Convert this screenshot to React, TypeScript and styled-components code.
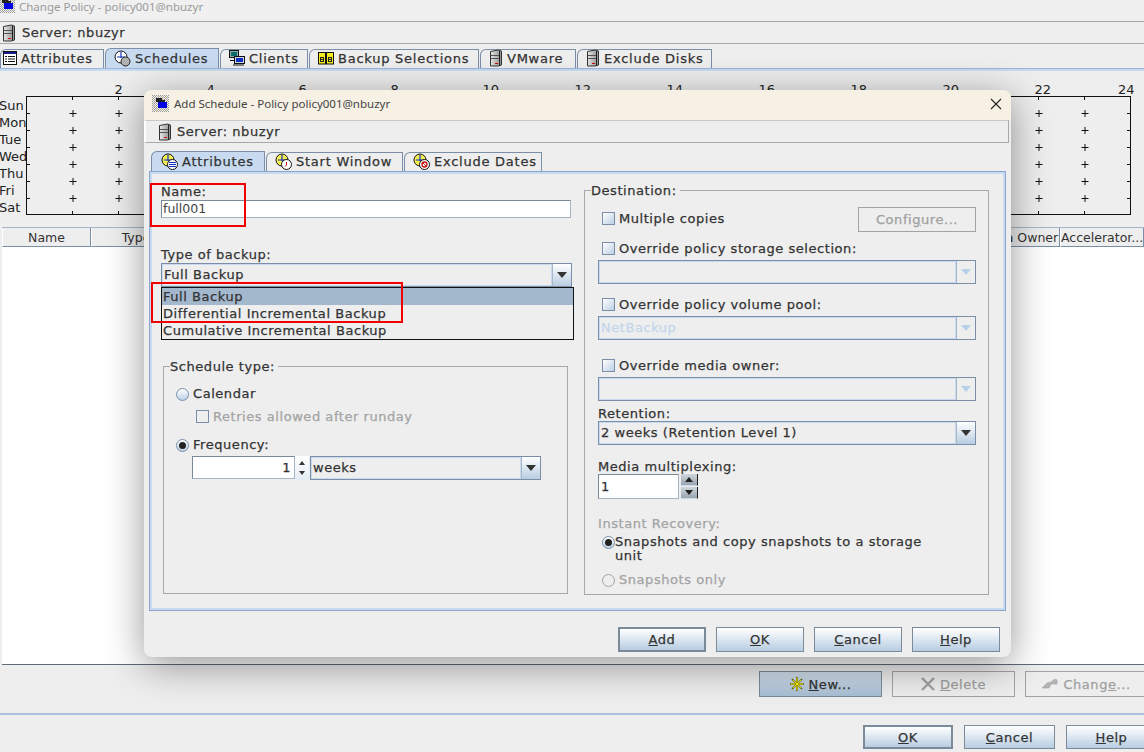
import React from 'react';
import styled, { createGlobalStyle } from 'styled-components';

const GlobalStyle = createGlobalStyle`
  html, body { margin: 0; padding: 0; background: #eeeeee; }
  * { box-sizing: border-box; }
`;

const Page = styled.div`
  position: relative;
  width: 1144px;
  height: 752px;
  overflow: hidden;
  display: flex;
  flex-direction: column;
  background: #eeeeee;
  color: #333333;
  font-family: "DejaVu Sans", sans-serif;
  font-size: 13px;
  line-height: 15px;
  letter-spacing: 0.55px;
  -webkit-text-stroke: 0.25px #333333;
`;

const WindowBar = styled.div`
  height: 22px;
  flex: none;
  display: flex;
  align-items: flex-start;
  gap: 4px;
  background: #f0f0f0;
  border-bottom: 1px solid #a8a8a8;
  color: #9a9a9a;
  font-family: "Noto Sans", sans-serif;
  font-size: 11.5px;
  line-height: 13px;
  letter-spacing: 0;
  -webkit-text-stroke: 0;
  overflow: hidden;

  svg { margin: -4px 0 0 -2px; }
`;

const ServerBar = styled.div`
  height: 22px;
  flex: none;
  display: flex;
  align-items: center;
  gap: 6px;
  padding-left: 2px;
  border-bottom: 1px solid #a8a8a8;
`;

const TabStrip = styled.div<{ $left: number; $top: number }>`
  display: flex;
  flex: none;
  height: 20px;
  gap: 1px;
  margin-top: ${p => p.$top}px;
  padding-left: ${p => p.$left}px;
  align-items: flex-end;
`;

const Tab = styled.div<{ $w: number; $pad?: number; $active?: boolean }>`
  width: ${p => p.$w}px;
  height: ${p => (p.$active ? 20 : 19)}px;
  display: flex;
  align-items: center;
  gap: 4px;
  padding: 0 0 ${p => (p.$active ? 0 : 2)}px ${p => p.$pad ?? 8}px;
  border: 1px solid #7a8ea8;
  border-bottom: none;
  border-top-left-radius: 6px;
  background: ${p => (p.$active ? '#c8daef' : '#eeeeee')};
  letter-spacing: 0.75px;
  white-space: nowrap;
`;

const TabBand = styled.div`
  height: 3px;
  flex: none;
  background: #c8daef;
  border-top: 1px solid #9cb6d6;
`;

const ChartWrap = styled.div`
  height: 156px;
  flex: none;
`;

const ChartSvg = styled.svg`
  display: block;
`;

const ChartText = styled.text`
  font-family: "DejaVu Sans", sans-serif;
  font-size: 13px;
  letter-spacing: 0;
  fill: #222222;
  stroke: none;
  -webkit-text-stroke: 0;
`;

const TableWrap = styled.div`
  height: 438px;
  flex: none;
  margin-left: 2px;
  display: flex;
  flex-direction: column;
  background: #ffffff;
  border-bottom: 1px solid #5f6a75;
`;

const TableHead = styled.div`
  display: flex;
  flex: none;
  height: 20px;
  background: #eeeeee;
  border-top: 1px solid #a8b6c6;
`;

const HeadCell = styled.div<{ $w?: number }>`
  ${p => (p.$w ? `width: ${p.$w}px; flex: none;` : 'flex: 1;')}
  text-align: center;
  line-height: 19px;
  font-size: 12.5px;
  letter-spacing: 0;
  white-space: nowrap;
  overflow: hidden;
  border-right: 1px solid #7a8ea8;
  border-bottom: 1px solid #7a8ea8;
  border-left: 1px solid #ffffff;
  -webkit-text-stroke: 0;
`;

const ActionRow = styled.div`
  display: flex;
  flex: none;
  height: 50px;
  gap: 10px;
  padding: 6px 0 0 759px;
  border-bottom: 2px solid #a9c0da;
`;

const FooterRow = styled.div`
  display: flex;
  flex: none;
  gap: 11px;
  padding: 10px 0 0 863px;
`;

const Btn = styled.div<{ $w: number; $h: number; $kind?: 'default' | 'hover' | 'off' }>`
  width: ${p => p.$w}px;
  height: ${p => p.$h}px;
  flex: none;
  display: flex;
  align-items: center;
  justify-content: center;
  gap: 5px;
  white-space: nowrap;
  border: ${p => (p.$kind === 'default' ? '2px solid #7a8a99' : '1px solid #7a8a99')};
  background: linear-gradient(#ffffff, #b8cde2);
  ${p => p.$kind === 'hover' && 'background: linear-gradient(#d3e0ed, #a9bfd4);'}
  ${p => p.$kind === 'off' && `
    background: transparent;
    border-color: #a3a3a3;
    color: #9f9f9f;
    -webkit-text-stroke: 0.25px #9f9f9f;
  `}
`;

const Dialog = styled.div`
  position: absolute;
  left: 144px;
  top: 90px;
  width: 867px;
  height: 567px;
  display: flex;
  flex-direction: column;
  background: #eeeeee;
  border-radius: 8px;
  box-shadow: 0 8px 38px rgba(0, 0, 0, 0.42);
  overflow: hidden;
`;

const DialogTitle = styled.div`
  height: 30px;
  flex: none;
  display: flex;
  align-items: center;
  gap: 5px;
  padding: 0 9px 3px 8px;
  background: #f7f1e5;
  color: #444444;
  font-family: "Noto Sans", sans-serif;
  font-size: 11.5px;
  letter-spacing: 0;
  -webkit-text-stroke: 0;
`;

const TitleText = styled.span`
  flex: 1;
`;

const DialogServer = styled.div`
  height: 23px;
  flex: none;
  display: flex;
  align-items: center;
  gap: 5px;
  margin-right: 2px;
  padding-left: 12px;
  border: 1px solid #a8a8a8;
  border-left: 2px solid #ffffff;
  border-top-color: #c8c8c8;
`;

const TabPanel = styled.div`
  height: 440px;
  flex: none;
  width: 857px;
  margin-left: 5px;
  display: flex;
  gap: 12px;
  padding: 10px 15px 0 9px;
  border: 3px solid #c8daef;
  outline: 1px solid #8aa6cc;
  outline-offset: -1px;
`;

const LeftCol = styled.div`
  position: relative;
  width: 411px;
  flex: none;
`;

const RightCol = styled.div`
  width: 405px;
  flex: none;
  margin-top: -1px;
`;

const FieldLabel = styled.div<{ $top?: number; $off?: boolean }>`
  height: 15px;
  margin-top: ${p => p.$top ?? 0}px;
  white-space: nowrap;
  ${p => p.$off && 'color: #a3a3a3; -webkit-text-stroke: 0.25px #a3a3a3;'}
`;

const NameInput = styled.div`
  width: 410px;
  height: 18px;
  margin-top: 1px;
  padding-left: 1px;
  line-height: 16px;
  font-size: 12.5px;
  letter-spacing: 0;
  background: #ffffff;
  border: 1px solid #a5b4c4;
  border-left-color: #7a8a99;
  border-top-color: #7a8a99;
  color: #444444;
  -webkit-text-stroke: 0;
`;

const Combo = styled.div<{ $w: number; $top?: number }>`
  width: ${p => p.$w}px;
  height: 24px;
  margin-top: ${p => p.$top ?? 0}px;
  flex: none;
  display: flex;
  border: 1px solid #7a8ea8;
`;

const ComboValue = styled.div<{ $off?: boolean }>`
  flex: 1;
  padding-left: 1px;
  line-height: 20px;
  white-space: nowrap;
  border: 1px solid #c8daef;
  ${p => p.$off && 'color: #c3d6ec; -webkit-text-stroke: 0.25px #c3d6ec;'}
`;

const ComboArrow = styled.div<{ $off?: boolean }>`
  width: 19px;
  flex: none;
  display: flex;
  align-items: center;
  justify-content: center;
  border-left: 1px solid #a8b6c6;
  background: ${p => (p.$off ? '#eeeeee' : 'linear-gradient(#ffffff, #b8cde2)')};

  &::after {
    content: '';
    border: 5px solid transparent;
    border-bottom-width: 0;
    border-top: 6px solid ${p => (p.$off ? '#b8d0ea' : '#333333')};
  }
`;

const DropList = styled.div`
  position: absolute;
  left: 0;
  top: 103px;
  width: 413px;
  height: 53px;
  background: #eeeeee;
  border: 1px solid #111111;
  z-index: 2;
`;

const DropItem = styled.div<{ $selected?: boolean }>`
  height: 17px;
  line-height: 17px;
  padding-left: 1px;
  white-space: nowrap;
  ${p => p.$selected && 'background: #a3b7cd;'}
`;

const RedBox = styled.div<{ $x: number; $y: number; $w: number; $h: number }>`
  position: absolute;
  left: ${p => p.$x}px;
  top: ${p => p.$y}px;
  width: ${p => p.$w}px;
  height: ${p => p.$h}px;
  border: 2px solid #f00000;
  z-index: 3;
`;

const GroupBox = styled.fieldset<{ $top?: number; $side?: number; $h: number; $left: number }>`
  margin: ${p => p.$top ?? 0}px 0 0 ${p => p.$side ?? 0}px;
  width: 405px;
  height: ${p => p.$h}px;
  min-width: 0;
  padding: 0 12px 0 ${p => p.$left}px;
  border: 1px solid #a8a8a8;
`;

const GroupLegend = styled.legend<{ $shift: number }>`
  margin-left: ${p => p.$shift}px;
  padding: 0 3px 0 0;
  line-height: 15px;
`;

const ChoiceRow = styled.div<{ $top?: number; $indent?: number; $between?: boolean; $off?: boolean }>`
  display: flex;
  align-items: center;
  justify-content: ${p => (p.$between ? 'space-between' : 'flex-start')};
  gap: 4px;
  min-height: 15px;
  margin-top: ${p => p.$top ?? 0}px;
  margin-left: ${p => p.$indent ?? 0}px;
  white-space: nowrap;
  ${p => p.$off && 'color: #a3a3a3; -webkit-text-stroke: 0.25px #a3a3a3;'}
`;

const WrapRow = styled.div<{ $top: number; $indent: number }>`
  display: flex;
  align-items: flex-start;
  margin-top: ${p => p.$top}px;
  margin-left: ${p => p.$indent}px;
`;

const CheckBox = styled.span<{ $off?: boolean }>`
  width: 13px;
  height: 13px;
  flex: none;
  border: 1px solid #7a8ea8;
  background: ${p => (p.$off ? 'transparent' : 'linear-gradient(135deg, #ffffff, #bcd0e6)')};
`;

const Radio = styled.span<{ $on?: boolean; $off?: boolean }>`
  width: 13px;
  height: 13px;
  flex: none;
  display: flex;
  align-items: center;
  justify-content: center;
  border-radius: 50%;
  margin-top: 1px;
  border: 1px solid ${p => (p.$off ? '#a3a3a3' : '#7a8ea8')};
  background: ${p => (p.$off ? 'transparent' : 'linear-gradient(#ffffff, #bcd0e6)')};

  &::after {
    content: '';
    display: ${p => (p.$on ? 'block' : 'none')};
    width: 7px;
    height: 7px;
    border-radius: 50%;
    background: #222222;
  }
`;

const SpinRow = styled.div<{ $top: number; $indent: number }>`
  display: flex;
  margin-top: ${p => p.$top}px;
  margin-left: ${p => p.$indent}px;
`;

const SpinInput = styled.div<{ $w: number; $h: number; $align: 'left' | 'right' }>`
  width: ${p => p.$w}px;
  height: ${p => p.$h}px;
  flex: none;
  padding: 0 3px 0 2px;
  text-align: ${p => p.$align};
  line-height: ${p => p.$h - 2}px;
  background: #ffffff;
  border: 1px solid #a5b4c4;
  border-left-color: #7a8a99;
  border-top-color: #7a8a99;
`;

const MiniSpin = styled.div`
  width: 14px;
  flex: none;
  margin-right: 1px;
  display: flex;
  flex-direction: column;
  align-items: center;
  justify-content: space-between;
  padding: 5px 0;
  background: linear-gradient(#ffffff, #e4ecf4);

  &::before, &::after {
    content: '';
    border: 3px solid transparent;
  }
  &::before { border-top-width: 0; border-bottom: 4px solid #333333; }
  &::after { border-bottom-width: 0; border-top: 4px solid #333333; }
`;

const Stepper = styled.div`
  width: 17px;
  margin-left: 2px;
  flex: none;
  display: flex;
  flex-direction: column;
  gap: 1px;
`;

const StepBtn = styled.div<{ $up?: boolean }>`
  flex: 1;
  display: flex;
  align-items: center;
  justify-content: center;
  background: linear-gradient(#cfd6dd, #9aa5b0);
  border-right: 1px solid #222222;
  border-bottom: 1px solid #c8daef;

  &::after {
    content: '';
    border: 4px solid transparent;
    ${p => (p.$up
      ? 'border-top-width: 0; border-bottom: 5px solid #222222;'
      : 'border-bottom-width: 0; border-top: 5px solid #222222;')}
  }
`;

const WrapText = styled.div`
  width: 322px;
  white-space: normal;
  line-height: 14px;
`;

const DialogButtons = styled.div`
  display: flex;
  flex: none;
  justify-content: flex-end;
  gap: 10px;
  margin-top: 16px;
  padding-right: 11px;
`;

const Ico = styled.svg`
  flex: none;
  display: block;
`;

const ServerIcon = () => (
  <Ico width="14" height="18" viewBox="0 0 14 18">
    <defs>
      <linearGradient id="srv" x1="0" x2="1" y1="0" y2="0">
        <stop offset="0" stopColor="#e8e8e8" />
        <stop offset="1" stopColor="#8c8c8c" />
      </linearGradient>
    </defs>
    <path d="M1.5 2.5 L9.5 1 L12.5 2 V16 L9.5 17 H1.5 Z" fill="url(#srv)" stroke="#333" strokeWidth="1" />
    <path d="M2 6.5 H10 M2 9.5 H10" stroke="#555" />
    <path d="M10.5 2 V17" stroke="#222" />
    <rect x="6" y="14" width="3" height="1" fill="#d00000" />
  </Ico>
);

const WindowIcon = () => (
  <Ico width="17" height="17" viewBox="0 0 17 17">
    <defs>
      <pattern id="dith" width="2" height="2" patternUnits="userSpaceOnUse">
        <rect width="1" height="1" fill="#999" />
        <rect x="1" y="1" width="1" height="1" fill="#aaa" />
      </pattern>
    </defs>
    <rect width="17" height="17" fill="url(#dith)" />
    <rect x="4" y="3" width="6" height="4" fill="#222" />
    <rect x="6" y="7" width="9" height="6" fill="#0000e0" />
    <rect x="6" y="5" width="7" height="2" fill="#222" />
  </Ico>
);

const ListIcon = () => (
  <Ico width="14" height="14" viewBox="0 0 14 14">
    <rect x="0.5" y="0.5" width="13" height="13" fill="#fff" stroke="#111" />
    <rect x="1" y="1" width="12" height="2" fill="#1a1a8c" />
    <path d="M2 5.5 H4 M5 5.5 H12 M2 8 H4 M5 8 H12 M2 10.5 H4 M5 10.5 H12" stroke="#111" />
  </Ico>
);

const GlobeIcon = ({ badge }: { badge: 'plain' | 'list' | 'clock' | 'stop' }) => (
  <Ico width="17" height="17" viewBox="0 0 17 17">
    <circle cx="7" cy="7" r="6" fill={badge === 'plain' ? '#ffffff' : '#f4ee50'} stroke="#111" />
    <path d="M7 2 V8 M3 7 H11" stroke="#1030c0" strokeWidth="1.2" />
    {badge === 'plain' && <circle cx="11.5" cy="11.5" r="4.5" fill="#b0b0b0" stroke="#222" />}
    {badge === 'list' && (
      <>
        <circle cx="11.5" cy="11.5" r="5" fill="#fff" stroke="#111" />
        <path d="M8 9.5 H15 M8 11.5 H15 M8 13.5 H15" stroke="#1030c0" />
      </>
    )}
    {badge === 'clock' && (
      <>
        <circle cx="11.5" cy="11.5" r="5" fill="#fff" stroke="#111" />
        <path d="M11.5 9 V12 M10 13.5 L11.5 12" stroke="#c01010" />
      </>
    )}
    {badge === 'stop' && (
      <>
        <circle cx="11.5" cy="11.5" r="5" fill="#fff" stroke="#111" />
        <circle cx="11.5" cy="11.5" r="2.5" fill="none" stroke="#c01010" strokeWidth="1.3" />
        <path d="M9.8 9.8 L13.2 13.2" stroke="#c01010" />
      </>
    )}
  </Ico>
);

const ClientsIcon = () => (
  <Ico width="16" height="16" viewBox="0 0 16 16">
    <rect x="0.5" y="0.5" width="9" height="7" fill="#8fb0b0" stroke="#111" />
    <rect x="2" y="2" width="6" height="4" fill="#0a6a6a" />
    <rect x="5.5" y="6.5" width="10" height="7" fill="#d0d8e8" stroke="#111" />
    <rect x="7" y="8" width="7" height="4" fill="#1030c0" />
    <path d="M1 10.5 H5 M4 15 H15" stroke="#111" />
  </Ico>
);

const BooksIcon = () => (
  <Ico width="16" height="14" viewBox="0 0 16 14">
    <rect x="0.5" y="1.5" width="7" height="11.5" fill="#f5ee20" stroke="#111" />
    <rect x="8.5" y="1.5" width="7" height="11.5" fill="#f5ee20" stroke="#111" />
    <rect x="2" y="6" width="4" height="5" fill="#222" />
    <rect x="10" y="6" width="4" height="5" fill="#222" />
    <rect x="3" y="7" width="2" height="1" fill="#f5ee20" />
    <rect x="3" y="9" width="2" height="1" fill="#f5ee20" />
    <rect x="11" y="7" width="2" height="1" fill="#f5ee20" />
    <rect x="11" y="9" width="2" height="1" fill="#f5ee20" />
  </Ico>
);

const StarIcon = () => (
  <Ico width="14" height="14" viewBox="0 0 14 14">
    <path d="M7 0 V14 M0 7 H14 M2 2 L12 12 M12 2 L2 12" stroke="#6e6a00" strokeWidth="1.6" />
    <path d="M7 1 V13 M1 7 H13 M3 3 L11 11 M11 3 L3 11" stroke="#fff200" strokeWidth="0.9" />
  </Ico>
);

const CrossIcon = () => (
  <Ico width="14" height="14" viewBox="0 0 14 14">
    <path d="M1 1 L13 13 M13 1 L1 13" stroke="#a0a0a0" strokeWidth="2.4" />
  </Ico>
);

const HandIcon = () => (
  <Ico width="16" height="10" viewBox="0 0 16 10">
    <path d="M0 9 L5 4 L9 3 L13 0 L15 1 L15 5 L9 5 L7 9 Z" fill="#b4b4b4" stroke="#a0a0a0" strokeWidth="0.6" />
  </Ico>
);

const CloseIcon = () => (
  <Ico width="12" height="12" viewBox="0 0 12 12">
    <path d="M1 1 L11 11 M11 1 L1 11" stroke="#222" strokeWidth="1.1" />
  </Ico>
);

const days = ['Sun', 'Mon', 'Tue', 'Wed', 'Thu', 'Fri', 'Sat'];
const hours = Array.from({ length: 12 }, (_, i) => (i + 1) * 2);
const ticks = Array.from({ length: 23 }, (_, i) => 26.5 + (i + 1) * 46);
const rowsY = [113, 130, 147, 164, 181, 198];

const ScheduleChart = () => (
  <ChartSvg width="1144" height="156" viewBox="0 71 1144 156">
    {hours.map(h => (
      <ChartText key={h} x={h === 24 ? 1118 : 26.5 + h * 46 - 4} y={94}>{h}</ChartText>
    ))}
    {days.map((d, i) => (
      <ChartText key={d} x={-1} y={110 + i * 17}>{d}</ChartText>
    ))}
    <rect x="26.5" y="96.5" width="1104" height="118" fill="none" stroke="#111" />
    {ticks.map(x => (
      <g key={x} stroke="#111">
        <path d={`M${x} 97 V100 M${x} 211 V214`} />
        {rowsY.map(y => (
          <path key={y} d={`M${x - 3} ${y + 0.5} H${x + 4} M${x + 0.5} ${y - 3} V${y + 4}`} />
        ))}
      </g>
    ))}
    {rowsY.map(y => (
      <path key={y} d={`M1127 ${y + 0.5} H1130 M27 ${y + 0.5} H30`} stroke="#111" />
    ))}
  </ChartSvg>
);

export default function App() {
  return (
    <Page>
      <GlobalStyle />
      <WindowBar>
        <WindowIcon />
        <span>Change Policy - policy001@nbuzyr</span>
      </WindowBar>
      <ServerBar>
        <ServerIcon />
        <span>Server: nbuzyr</span>
      </ServerBar>
      <TabStrip $left={0} $top={4}>
        <Tab $w={104} $pad={2}><ListIcon /><span>Attributes</span></Tab>
        <Tab $w={114} $active><GlobeIcon badge="plain" /><span>Schedules</span></Tab>
        <Tab $w={88}><ClientsIcon /><span>Clients</span></Tab>
        <Tab $w={170}><BooksIcon /><span>Backup Selections</span></Tab>
        <Tab $w={96}><ServerIcon /><span>VMware</span></Tab>
        <Tab $w={135}><ServerIcon /><span>Exclude Disks</span></Tab>
      </TabStrip>
      <TabBand />
      <ChartWrap><ScheduleChart /></ChartWrap>
      <TableWrap>
        <TableHead>
          <HeadCell $w={89}>Name</HeadCell>
          <HeadCell $w={90}>Type</HeadCell>
          <HeadCell />
          <HeadCell $w={86}>Media Owner</HeadCell>
          <HeadCell $w={84}>Accelerator...</HeadCell>
        </TableHead>
      </TableWrap>
      <ActionRow>
        <Btn $w={123} $h={26} $kind="hover"><StarIcon /><span><u>N</u>ew...</span></Btn>
        <Btn $w={123} $h={26} $kind="off"><CrossIcon /><span><u>D</u>elete</span></Btn>
        <Btn $w={123} $h={26} $kind="off"><HandIcon /><span>Chang<u>e</u>...</span></Btn>
      </ActionRow>
      <FooterRow>
        <Btn $w={90} $h={24} $kind="default"><span><u>O</u>K</span></Btn>
        <Btn $w={91} $h={24}><span><u>C</u>ancel</span></Btn>
        <Btn $w={91} $h={24}><span><u>H</u>elp</span></Btn>
      </FooterRow>

      <Dialog>
        <DialogTitle>
          <WindowIcon />
          <TitleText>Add Schedule - Policy policy001@nbuzyr</TitleText>
          <CloseIcon />
        </DialogTitle>
        <DialogServer>
          <ServerIcon />
          <span>Server: nbuzyr</span>
        </DialogServer>
        <TabStrip $left={7} $top={8}>
          <Tab $w={114} $pad={9} $active><GlobeIcon badge="list" /><span>Attributes</span></Tab>
          <Tab $w={137}><GlobeIcon badge="clock" /><span>Start Window</span></Tab>
          <Tab $w={138}><GlobeIcon badge="stop" /><span>Exclude Dates</span></Tab>
        </TabStrip>
        <TabPanel>
          <LeftCol>
            <FieldLabel>Name:</FieldLabel>
            <NameInput>full001</NameInput>
            <FieldLabel $top={29}>Type of backup:</FieldLabel>
            <Combo $w={411} $top={1}>
              <ComboValue>Full Backup</ComboValue>
              <ComboArrow />
            </Combo>
            <DropList>
              <DropItem $selected>Full Backup</DropItem>
              <DropItem>Differential Incremental Backup</DropItem>
              <DropItem>Cumulative Incremental Backup</DropItem>
            </DropList>
            <GroupBox $top={72} $side={2} $h={235} $left={12}>
              <GroupLegend $shift={-6}>Schedule type:</GroupLegend>
              <ChoiceRow $top={12}><Radio /><span>Calendar</span></ChoiceRow>
              <ChoiceRow $top={8} $indent={20} $off><CheckBox $off /><span>Retries allowed after runday</span></ChoiceRow>
              <ChoiceRow $top={13}><Radio $on /><span>Frequency:</span></ChoiceRow>
              <SpinRow $top={4} $indent={16}>
                <SpinInput $w={103} $h={23} $align="right">1</SpinInput>
                <MiniSpin />
                <Combo $w={231}>
                  <ComboValue>weeks</ComboValue>
                  <ComboArrow />
                </Combo>
              </SpinRow>
            </GroupBox>
          </LeftCol>
          <RightCol>
            <GroupBox $h={412} $left={13}>
              <GroupLegend $shift={-7}>Destination:</GroupLegend>
              <ChoiceRow $top={9} $between>
                <ChoiceRow $top={-2} $indent={4}><CheckBox /><span>Multiple copies</span></ChoiceRow>
                <Btn $w={118} $h={25} $kind="off"><span>Confi<u>g</u>ure...</span></Btn>
              </ChoiceRow>
              <ChoiceRow $top={9} $indent={4}><CheckBox /><span>Override policy storage selection:</span></ChoiceRow>
              <Combo $w={378} $top={4}><ComboValue /><ComboArrow $off /></Combo>
              <ChoiceRow $top={13} $indent={4}><CheckBox /><span>Override policy volume pool:</span></ChoiceRow>
              <Combo $w={378} $top={4}><ComboValue $off>NetBackup</ComboValue><ComboArrow $off /></Combo>
              <ChoiceRow $top={18} $indent={4}><CheckBox /><span>Override media owner:</span></ChoiceRow>
              <Combo $w={378} $top={4}><ComboValue /><ComboArrow $off /></Combo>
              <FieldLabel $top={5}>Retention:</FieldLabel>
              <Combo $w={378}><ComboValue>2 weeks (Retention Level 1)</ComboValue><ComboArrow /></Combo>
              <FieldLabel $top={14}>Media multiplexing:</FieldLabel>
              <SpinRow $top={0} $indent={0}>
                <SpinInput $w={81} $h={25} $align="left">1</SpinInput>
                <Stepper>
                  <StepBtn $up />
                  <StepBtn />
                </Stepper>
              </SpinRow>
              <FieldLabel $top={17} $off>Instant Recovery:</FieldLabel>
              <WrapRow $top={4} $indent={4}>
                <Radio $on />
                <WrapText>Snapshots and copy snapshots to a storage unit</WrapText>
              </WrapRow>
              <ChoiceRow $top={9} $indent={4} $off><Radio $off /><span>Snapshots only</span></ChoiceRow>
            </GroupBox>
          </RightCol>
        </TabPanel>
        <DialogButtons>
          <Btn $w={88} $h={25} $kind="default"><span><u>A</u>dd</span></Btn>
          <Btn $w={88} $h={25}><span><u>O</u>K</span></Btn>
          <Btn $w={88} $h={25}><span><u>C</u>ancel</span></Btn>
          <Btn $w={88} $h={25}><span><u>H</u>elp</span></Btn>
        </DialogButtons>
      </Dialog>
      <RedBox $x={150} $y={183} $w={96} $h={44} />
      <RedBox $x={151} $y={282} $w={252} $h={41} />
    </Page>
  );
}
